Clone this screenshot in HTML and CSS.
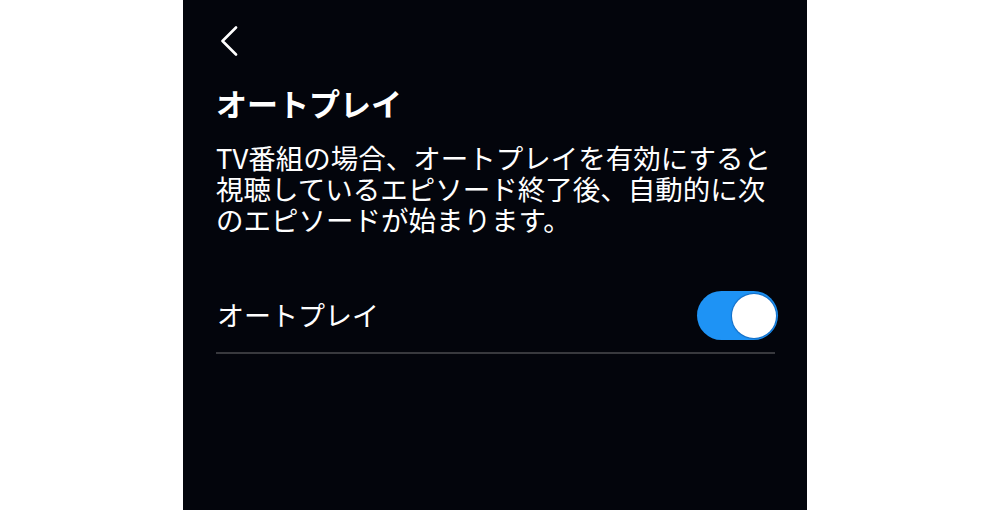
FILE: index.html
```html
<!DOCTYPE html>
<html lang="ja">
<head>
<meta charset="utf-8">
<title>オートプレイ</title>
<link rel="stylesheet" href="styles.css">
</head>
<body>
<main class="panel">
  <button class="back" type="button" aria-label="戻る">
    <svg width="18" height="30" viewBox="0 0 18 30" aria-hidden="true">
      <path d="M16 1.5 L2.5 15 L16 28.5" fill="none" stroke="#ffffff" stroke-width="2.6" stroke-linecap="round" stroke-linejoin="round"/>
    </svg>
  </button>
  <h1 class="title">オートプレイ</h1>
  <p class="desc">TV番組の場合、オートプレイを有効にすると視聴しているエピソード終了後、自動的に次のエピソードが始まります。</p>
  <div class="setting-row">
    <span class="setting-label">オートプレイ</span>
    <span class="toggle is-on" role="switch" aria-checked="true"><span class="knob"></span></span>
  </div>
</main>
</body>
</html>
```

FILE: styles.css
```css
html, body {
  margin: 0;
  padding: 0;
  background: #ffffff;
}

body {
  display: flex;
  justify-content: center;
  height: 510px;
  overflow: hidden;
  font-family: "Noto Sans CJK JP", "Noto Sans", sans-serif;
  color: #ffffff;
}

.panel {
  width: 624px;
  height: 510px;
  box-sizing: border-box;
  background: #03050c;
  padding: 26px 32px 0 33px;
}

.back {
  display: block;
  width: 24px;
  height: 30px;
  padding: 0;
  margin: 0 0 0 4px;
  border: 0;
  background: none;
}

.back svg {
  display: block;
}

.title {
  margin: 27px 0 0 0;
  font-size: 31px;
  font-weight: 700;
  line-height: 40px;
  letter-spacing: 0;
}

.desc {
  margin: 19px 0 0 0;
  font-size: 27.5px;
  line-height: 31px;
  font-weight: 400;
}

.setting-row {
  display: flex;
  align-items: center;
  justify-content: space-between;
  height: 74px;
  margin-top: 43px;
  border-bottom: 2px solid #38393e;
}

.setting-label {
  font-size: 27px;
  line-height: 36px;
  margin-left: 1px;
}

.toggle {
  position: relative;
  display: block;
  width: 81px;
  height: 49px;
  border-radius: 25px;
  background: #1e93f5;
  margin-right: -3px;
  margin-top: 1px;
}

.knob {
  position: absolute;
  top: 3px;
  right: 2px;
  width: 44px;
  height: 44px;
  border-radius: 50%;
  background: #ffffff;
  box-shadow: 0 0 1px 1px rgba(10, 80, 160, 0.6);
}
```
